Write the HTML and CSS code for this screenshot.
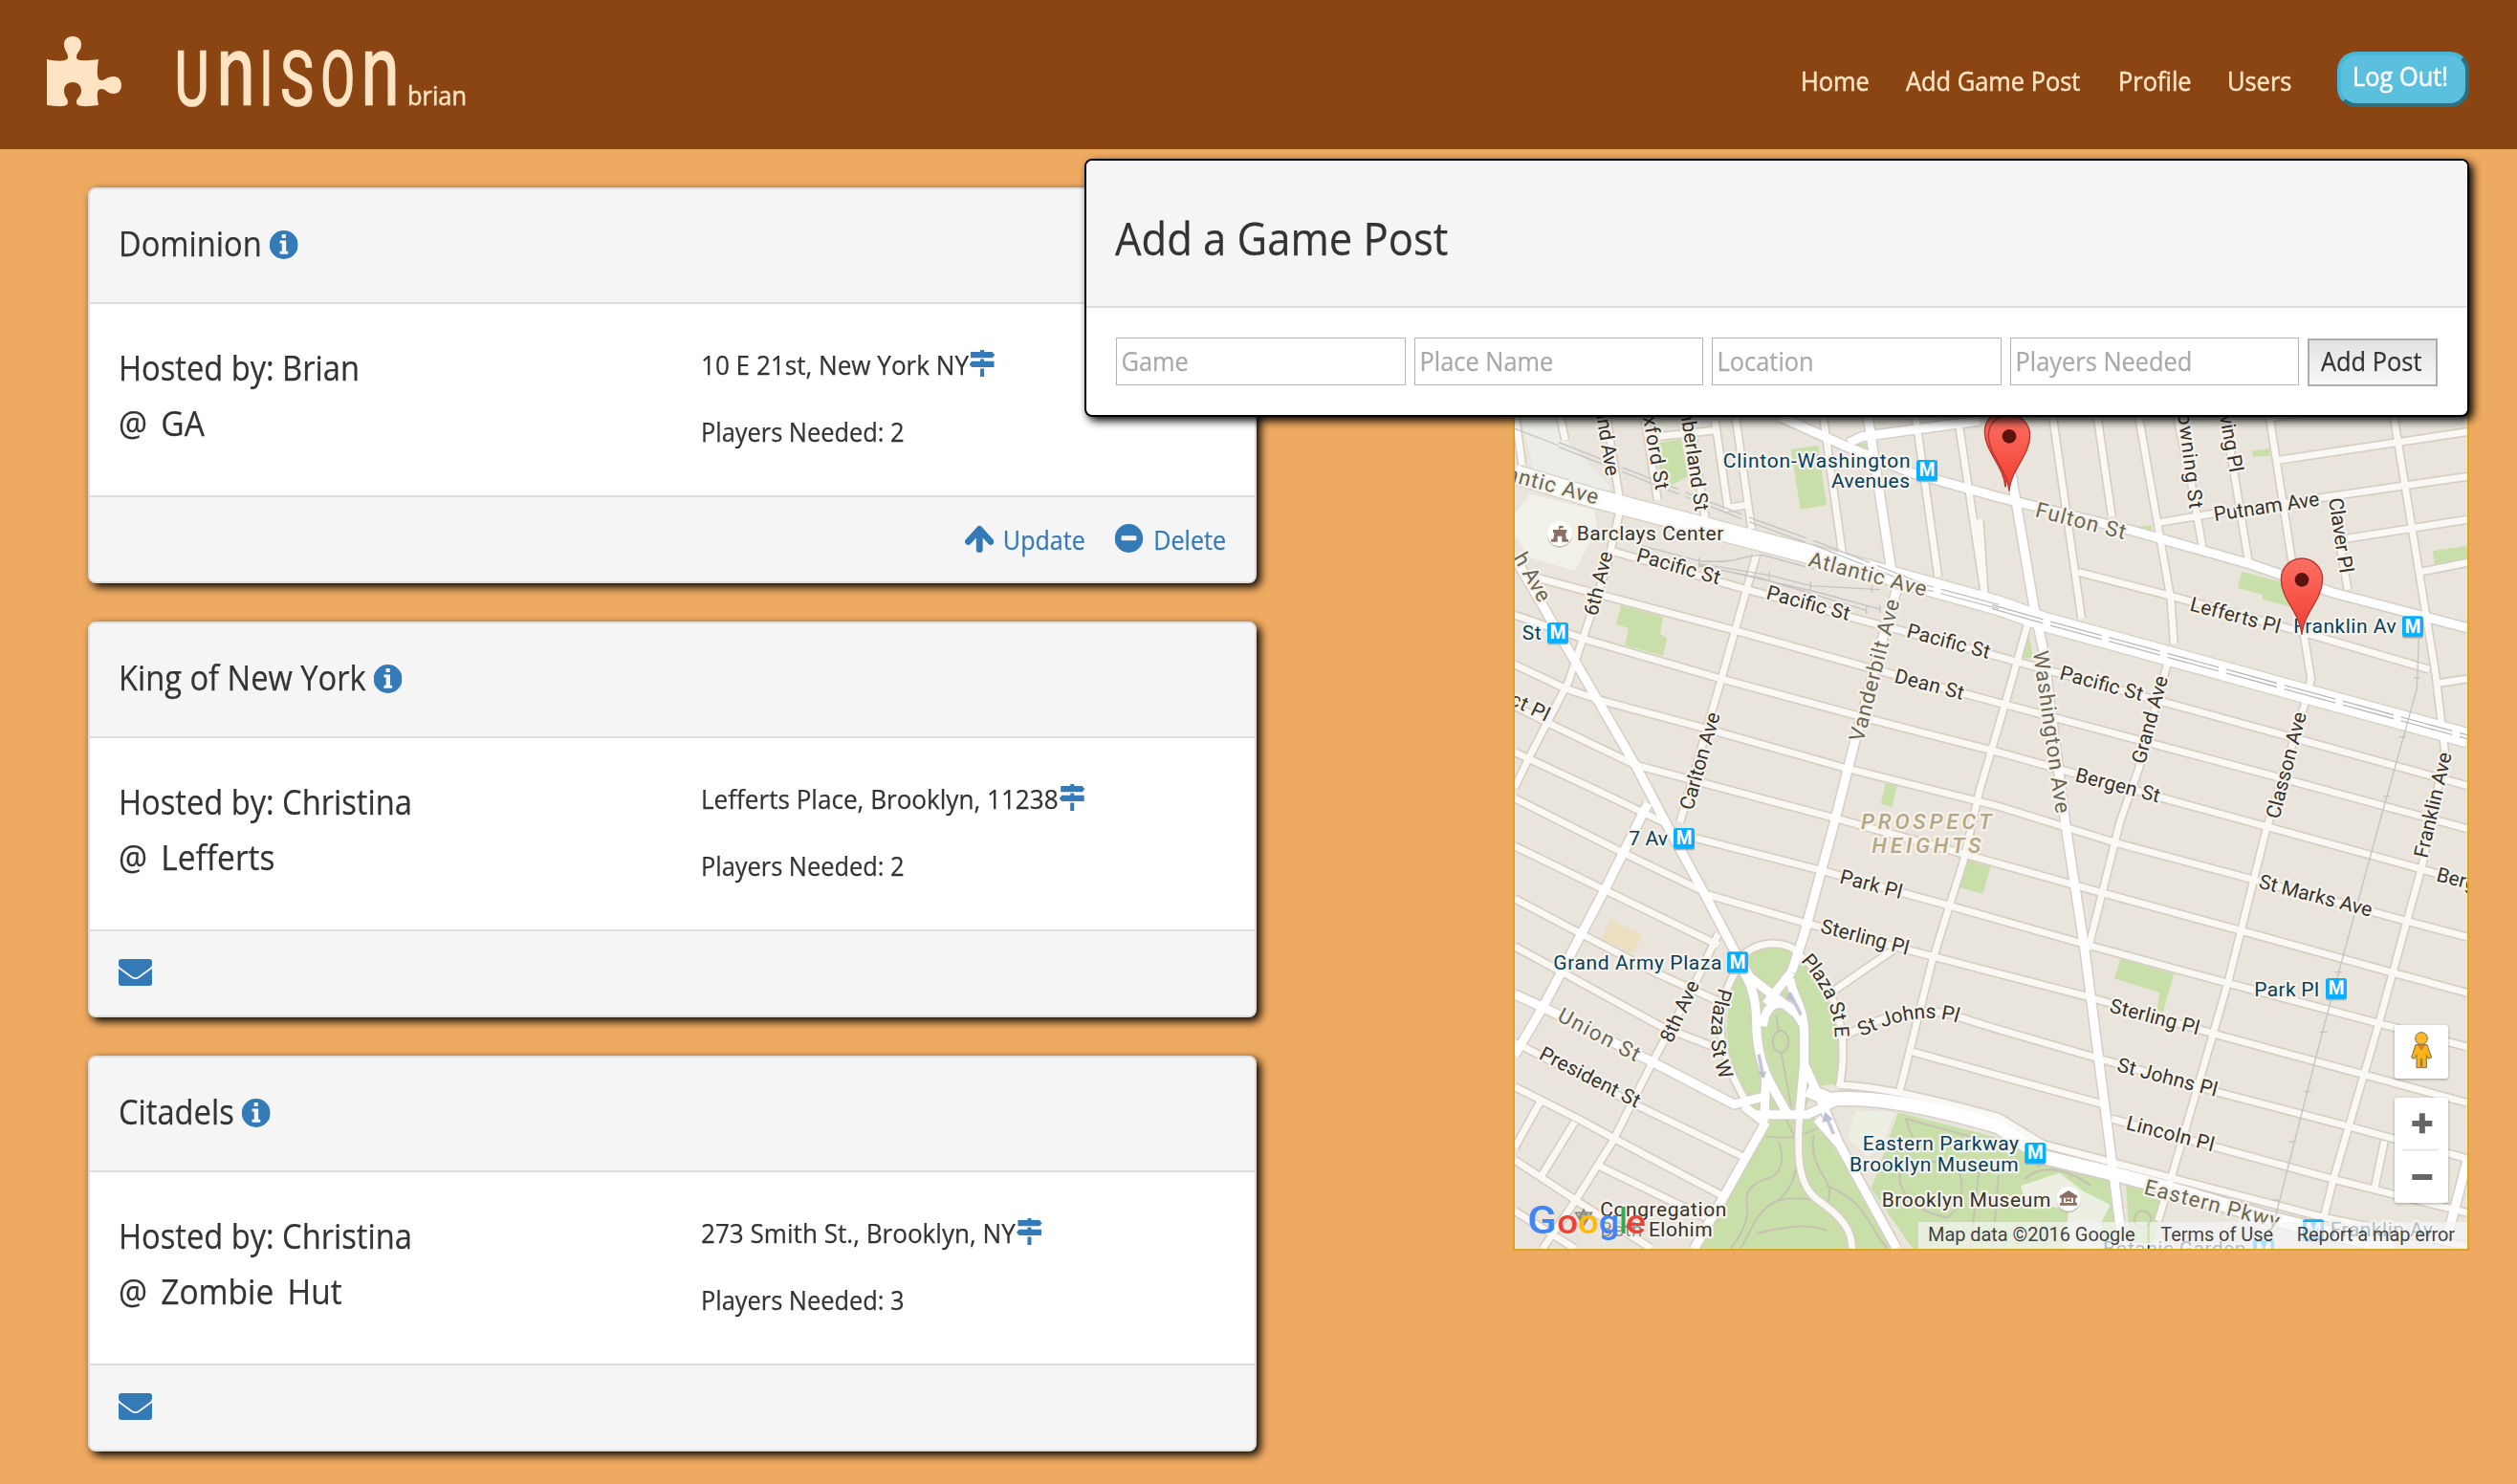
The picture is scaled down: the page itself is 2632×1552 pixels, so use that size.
FILE: index.html
```html
<!DOCTYPE html>
<html lang="en">
<head>
<meta charset="utf-8">
<title>Unison</title>
<link rel="stylesheet" href="styles.css">
</head>
<body>
<svg class="sprite" width="0" height="0">
  <symbol id="i-info" viewBox="0 0 30 30" preserveAspectRatio="none"><circle cx="15" cy="15" r="15" fill="#337ab7"/><path d="M12.9 4h4.2v4h-4.2zM10.8 10.5h6.6v11.3h2.1v3h-8.7v-3h2.200v-8.300h-2.200z" fill="#f5f5f5"/></symbol>
  <symbol id="i-sign" viewBox="0 0 27 28" preserveAspectRatio="none"><path d="M11.500 0h4v2H24l2.700 3.200L24 8.200H1.500V2h10zM11.500 9.500h4v2.300H26V18H2.700L0 14.900l2.700-3.100h8.800zM11.500 19.500h4V28h-4z" fill="#337ab7"/></symbol>
  <symbol id="i-up" viewBox="0 0 31 29" preserveAspectRatio="none"><path d="M3.500 17.500 15.500 4.500 27.500 17.500M15.500 6v19.500" fill="none" stroke="#337ab7" stroke-width="7" stroke-linecap="round" stroke-linejoin="round"/></symbol>
  <symbol id="i-minus" viewBox="0 0 30 30" preserveAspectRatio="none"><circle cx="15" cy="15" r="15" fill="#337ab7"/><rect x="7" y="12.200" width="16" height="5" rx="1" fill="#f5f5f5"/></symbol>
  <symbol id="i-mail" viewBox="0 0 35 28"><path d="M3 0h29q3 0 3 3v2.500q0 2-2.500 4L21 18q-3.500 2.500-7 0L2.500 9.500Q0 7.500 0 5.500V3q0-3 3-3zM0 10l13 9.500q4.500 3 9 0L35 10v15q0 3-3 3H3q-3 0-3-3z" fill="#337ab7"/></symbol>
</svg>

<header class="topbar">
  <div class="brand">
    <svg class="puzzle" viewBox="48 37 80 76"><path d="M49 62C58 64 71 65 71 60C71 54 67 54 67 46C67 41 71 38 76 38S85 41 85 46C85 54 80 54 80 60C80 65 94 63 103 62C101 75 101 84 106 84C110 84 112 80 119 80C124 80 127 84 127 89S124 98 119 98C112 98 111 93 106 93C101 93 101 99 103 110C94 111 80 113 80 107C80 102 85 101 85 95C85 89 81 86 76 86S67 89 67 95C67 101 71 103 71 107C71 113 58 111 49 110Z"/></svg>
    <svg class="wordmark" viewBox="184 50 232 66">
      <text transform="translate(182.800 110) scale(.7 1)" font-size="79">U</text>
      <text transform="translate(226.500 110) scale(.7 1)" font-size="104">n</text>
      <text transform="translate(271.500 110) scale(.64 1)" font-size="79">I</text>
      <text transform="translate(293.300 110) scale(.74 1)" font-size="79">S</text>
      <text transform="translate(335.300 110) scale(.66 1)" font-size="79">O</text>
      <text transform="translate(377.500 110) scale(.7 1)" font-size="104">n</text>
    </svg>
    <span class="user">brian</span>
  </div>
  <nav class="nav">
    <a class="n1">Home</a><a class="n2">Add Game Post</a><a class="n3">Profile</a><a class="n4">Users</a>
    <a class="logout"><span>Log Out!</span></a>
  </nav>
</header>

<main class="page">
  <section class="posts">
    <article class="card">
      <div class="card-head"><h2>Dominion<svg class="ic-info"><use href="#i-info"/></svg></h2></div>
      <div class="card-body">
        <div class="host"><p>Hosted by: Brian</p><p>@ GA</p></div>
        <div class="place"><p>10 E 21st, New York NY<svg class="ic-sign"><use href="#i-sign"/></svg></p><p>Players Needed: 2</p></div>
      </div>
      <div class="card-foot">
        <div class="actions">
          <a class="update"><svg class="ic-up"><use href="#i-up"/></svg>Update</a>
          <a class="delete"><svg class="ic-minus"><use href="#i-minus"/></svg>Delete</a>
        </div>
      </div>
    </article>
    <article class="card">
      <div class="card-head"><h2>King of New York<svg class="ic-info"><use href="#i-info"/></svg></h2></div>
      <div class="card-body">
        <div class="host"><p>Hosted by: Christina</p><p>@ Lefferts</p></div>
        <div class="place"><p>Lefferts Place, Brooklyn, 11238<svg class="ic-sign"><use href="#i-sign"/></svg></p><p>Players Needed: 2</p></div>
      </div>
      <div class="card-foot"><svg class="ic-mail"><use href="#i-mail"/></svg></div>
    </article>
    <article class="card">
      <div class="card-head"><h2>Citadels<svg class="ic-info"><use href="#i-info"/></svg></h2></div>
      <div class="card-body">
        <div class="host"><p>Hosted by: Christina</p><p>@ Zombie Hut</p></div>
        <div class="place"><p>273 Smith St., Brooklyn, NY<svg class="ic-sign"><use href="#i-sign"/></svg></p><p>Players Needed: 3</p></div>
      </div>
      <div class="card-foot"><svg class="ic-mail"><use href="#i-mail"/></svg></div>
    </article>
  </section>

  <section class="map">
    <svg viewBox="42 -312 2988 2970">
      <defs>
        <g id="minor">
          <path d="M350 470 770 590 1560 800 2050 935 3030 1205M100 550 740 720 1150 835 1560 945 2030 1070 2460 1185 3030 1340M42 670 260 745 690 870 1170 1000 1560 1100 2060 1240 2880 1465 3030 1510M42 825 200 900 320 940 620 1020 1080 1150 1560 1270 1930 1385 2360 1500 2840 1630 3030 1680"/>
          <path d="M42 955 150 1010 420 1140 1040 1305 1560 1450 1880 1540 2320 1660 2790 1790 3030 1855M610 1370 1000 1470 1400 1580 1840 1705 2280 1825 2750 1950 3030 2025M640 1545 950 1635 1350 1740 1850 1870 2240 1985 2700 2110 3030 2200M1060 2000Q1250 1890 1400 1920L1560 1970 1870 2060 2240 2165 2660 2275 3030 2375M1290 2040 1560 2115 1890 2205M1915 2250 2610 2440 3030 2545"/>
          <path d="M1060 2145Q1200 2145 1560 2245L1700 2330 1930 2390 2100 2435 2580 2560 3030 2650M800 480 690 870 560 1320M370 350 330 520 210 880 90 1110 42 1210M1650 700 1580 950 1500 1220 1450 1440 1350 1760 1250 2160M2090 820 2000 1150 1940 1320 1840 1720M2000 50 2100 620 2110 760M2520 950 2400 1340 2280 1820 2100 2440 2060 2570M2410 50 2480 500 2540 870 2520 950M2800 50 2930 850 2960 1100 2890 1450 2750 1960 2610 2440 2580 2560M2770 2320 2740 2465"/>
          <path d="M1730 50 1820 680M1870 50 1915 360M2120 50 2165 260 2200 460M2270 50 2345 510M2610 330 2655 590M2060 380 2240 350 3030 235M2430 185 3030 95M2650 430 3030 370M2880 535 3030 505M2930 885 3030 870M1810 535 2100 610 2500 720 2910 840M2420 50 2520 30M1500 370 1515 600"/>
          <path d="M45 50 65 200M185 50 200 120M330 50 370 300M450 50 490 310M590 50 640 370M670 60 710 330M735 50 785 400M490 110 670 90M700 335 765 325M1010 50 1070 480M1300 50 1370 550M1435 70 1515 600M42 1100 300 1220 520 1325M42 1245 390 1420 620 1530M42 1395 330 1535 680 1705M42 1560 250 1670 480 1790 700 1890M42 1710 190 1790 500 1960 680 2030M42 2010 100 2040 430 2210 760 2370M42 2150 240 2250 350 2310 690 2490M42 2380 240 2510 470 2657M310 2400 640 2560M42 2540 230 2657M680 1670 610 1820 470 2080 350 2320 230 2510 130 2657M120 2200 42 2340M230 2260 125 2430M1040 1850 1230 1720M740 1760C780 1690 900 1680 940 1740C1060 1840 1090 2000 1060 2150M740 1780C640 1940 700 2080 770 2200M935 2240C930 2340 920 2460 1000 2510C1070 2560 1100 2600 1100 2657"/>
        </g>
        <g id="major">
          <path d="M880 50 1080 140 1290 225 1560 300 1980 405 2350 510 2610 600 3030 710M1090 130 1130 110 1500 60M1150 50 1225 540M1240 590 1180 800 1100 1100 1045 1320 950 1670 910 1790M1580 50 1600 230 1670 640 1700 780 1770 1330 1830 1720 1950 2657M42 490 240 830 420 1140 520 1330 640 1550 740 1740 800 1840M460 1260 330 1520 130 1900 42 2050M42 1860 130 1900 470 2070 730 2205 830 2180M3030 2380 2970 2610"/>
          <path d="M830 2260 700 2490 605 2657M990 2250 1060 2330 1240 2657M760 1790Q800 1850 800 1950 800 2060 850 2150L900 2240M910 1790 830 1890M760 1790 950 1940M905 1810C910 1860 950 1900 950 1980V2080L1010 2210 1060 2330M820 1960C830 1870 900 1860 950 1960M950 2080 935 2237M790 2237H960L1060 2190M760 2210 830 2265M830 2120 825 2250"/>
        </g>
        <g id="wide"><path d="M42 228 300 305 780 430 1200 540 1560 640 1700 690 2100 800 2500 910 3030 1055"/></g>
        <g id="pkwy"><path d="M960 2160 1030 2190Q1200 2170 1560 2275L1700 2370 1930 2425 2100 2470 2400 2560 2800 2657"/></g>
        <g id="metro"><rect y="5" width="66" height="65" rx="8" fill="#a8b4b8"/><rect width="66" height="65" rx="8" fill="#04b0ff"/><text x="8" y="52" font-size="58" font-weight="700" fill="#fff" textLength="50" lengthAdjust="spacingAndGlyphs">M</text></g>
        <linearGradient id="pinfill" x1="0" y1="0" x2="0" y2="1"><stop offset="0" stop-color="#fb7064"/><stop offset="1" stop-color="#f23d30"/></linearGradient>
        <g id="pin"><path d="M0 0C-6-70-65-110-65-174A65 65 0 1 1 65-174C65-110 6-70 0 0Z" fill="url(#pinfill)" stroke="#b63830" stroke-width="4"/></g>
        <path id="pw" d="M682 1838Q630 2000 690 2135"/>
        <path id="pe" d="M938 1755Q1050 1880 1046 2000"/>
        <path id="sj" d="M1130 1993Q1300 1905 1435 1950"/>
      </defs>
      <rect x="42" y="-312" width="2988" height="2970" fill="#e9e5dc"/>
      <path d="M60 50H180L200 120 345 270 300 290 100 210Z" fill="#ebede6"/>
      <path d="M42 350 90 290 290 340 300 380 290 420 230 530 90 490 42 420Z" fill="#f1f1e8"/>
      <g fill="#c9dfaa">
        <path d="M490 130 565 118 585 235 520 268 500 250ZM908 150 993 138 1020 325 938 338ZM1100 130H1145V155ZM375 640 507 675 498 730 520 742 507 797 388 765 398 710 360 700ZM1205 1198 1242 1205 1225 1272 1190 1262Z"/>
        <path d="M2355 155 2410 147V170L2357 174ZM1980 395 2040 387V412ZM2323 533 2480 575V645L2388 620V605L2310 585ZM2922 468 3030 453V500L2927 510ZM1655 730 1668 805 1636 805ZM1460 1438 1535 1460 1510 1545 1438 1525ZM1942 1748 2110 1795 2075 1918 2057 1910 2065 1855 1923 1810Z"/>
        <path d="M745 1780C780 1700 890 1700 930 1740C1040 1840 1080 1980 1055 2140L980 2150 940 2260H820L770 2190C680 2070 700 1900 745 1780ZM820 2280 835 2240H980L1240 2657H605L720 2480ZM1245 2230 1560 2310 1700 2390 1920 2440 1950 2657H1290L1160 2470ZM1960 2455 2078 2495 2040 2657H1970Z"/>
      </g>
      <path d="M343 1625 440 1670 415 1735 313 1685Z" fill="#ebdfc2"/>
      <path d="M1110 2225 1235 2230 1200 2320 1150 2370 1085 2310ZM1630 2460 1750 2420 1830 2480 1910 2520 1880 2580 1890 2657H1760L1780 2540 1640 2500Z" fill="#ecefe2"/>
      <g fill="none" stroke="#c5c2b2" stroke-width="6">
        <path d="M890 2250C960 2350 920 2480 860 2510S790 2590 750 2657M860 2510Q920 2490 1000 2510M830 2305Q920 2320 990 2280M870 2320Q900 2420 830 2440T770 2520T720 2657M980 2300C960 2420 1060 2440 1020 2520M1020 2460C1150 2510 1150 2590 1210 2657M800 2610Q950 2570 1020 2600M1268 2250 1560 2330M1268 2250 1290 2310M1250 2390Q1320 2370 1430 2400 1470 2500 1400 2560 1280 2540 1250 2450ZM1500 2400 1470 2657M1560 2430 1540 2657M1640 2440Q1720 2370 1850 2460M1680 2400Q1750 2360 1860 2430"/>
        <circle cx="2012" cy="2565" r="26"/>
      </g>
      <g fill="none" stroke-linejoin="round">
        <use href="#minor" class="casing-minor"/><use href="#major" class="casing-major"/><use href="#pkwy" class="casing-pkwy"/><use href="#wide" class="casing-wide"/>
        <use href="#minor" class="fill-minor"/><use href="#major" class="fill-major"/><use href="#pkwy" class="fill-pkwy"/><use href="#wide" class="fill-wide"/>
        <g stroke="#c5c2b2" stroke-width="6"><ellipse cx="876" cy="2008" rx="25" ry="34"/><path d="M862 1925 870 1975M878 2042 910 2215"/></g>
        <g stroke="#c3c3c3" stroke-width="4">
          <path d="M42 85 180 138M180 128 800 372 990 440 1340 578 1560 637M180 142 800 386 990 454 1340 592 1560 650" stroke-dasharray="190 24"/>
          <path d="M1540 638 1700 684 3030 1046M1540 650 1700 696 3030 1058" stroke="#b9b9b5" stroke-dasharray="166 24"/>
          <path d="M440 452 620 500C760 510 740 480 820 482L980 525M620 508 840 545 970 578 1190 590M620 512 810 556 1000 600 1190 652M620 516 800 550 1145 655M620 490V520M840 533V560M970 565V595M1162 578V600M1187 640V664M1145 643V667"/>
          <path d="M2878 740 2872 900 2850 980 2755 1320 2575 1980 2420 2590M2862 866H2882M2816 1052H2838M2766 1238H2788M2614 1790H2636M2568 1978H2590M2518 2164H2540M2472 2322H2494M2416 2505H2438"/>
        </g>
        <g stroke="#c4c8dc" stroke-width="11"><path d="M940 1925 905 1855M807 2048 822 2120M1042 2298 1018 2240"/></g>
        <path d="M892 1872 904 1850 920 1880ZM805 2102H832L822 2124ZM1006 2262 1015 2228 1040 2252Z" fill="#b9bfd6"/>
      </g>
      <g class="labels">
        <g class="road">
          <text transform="translate(12 246) rotate(15)" textLength="296">antic Ave</text>
          <text transform="translate(960 515) rotate(14.700)" textLength="380">Atlantic Ave</text>
          <text transform="translate(1135 1070) rotate(-75.500)" textLength="458">Vanderbilt Ave</text>
          <text transform="translate(1672 360) rotate(14.500)" textLength="290">Fulton St</text>
          <text transform="translate(1668 785) rotate(82)" textLength="514">Washington Ave</text>
          <text transform="translate(172 1940) rotate(28)" textLength="282">Union St</text>
          <text transform="translate(2013 2485) rotate(14.500)" textLength="435">Eastern Pkwy</text>
          <text transform="translate(36 490) rotate(60)" textLength="166">h Ave</text>
        </g>
        <g class="street">
          <text transform="translate(295 25) rotate(81)" textLength="213">and Ave</text>
          <text transform="translate(436 5) rotate(80)" textLength="278">Oxford St</text>
          <text transform="translate(558 10) rotate(81.500)" textLength="340">mberland St</text>
          <text transform="translate(600 1285) rotate(-74)" textLength="315">Carlton Ave</text>
          <text transform="translate(300 675) rotate(-76)" textLength="205">6th Ave</text>
          <text transform="translate(420 500) rotate(16)" textLength="270">Pacific St</text>
          <text transform="translate(828 618) rotate(15)" textLength="268">Pacific St</text>
          <text transform="translate(1268 738) rotate(15)" textLength="268">Pacific St</text>
          <text transform="translate(1230 880) rotate(14.500)" textLength="222">Dean St</text>
          <text transform="translate(22 948) rotate(26)" textLength="130">ct Pl</text>
          <text transform="translate(2122 40) rotate(83)" textLength="300">owning St</text>
          <text transform="translate(2253 45) rotate(80)" textLength="182">ving Pl</text>
          <text transform="translate(2238 375) rotate(-8.500)" textLength="334">Putnam Ave</text>
          <text transform="translate(2595 305) rotate(81.500)" textLength="238">Claver Pl</text>
          <text transform="translate(2157 655) rotate(14.500)" textLength="290">Lefferts Pl</text>
          <text transform="translate(1748 870) rotate(15)" textLength="268">Pacific St</text>
          <text transform="translate(2018 1140) rotate(-75)" textLength="283">Grand Ave</text>
          <text transform="translate(1797 1190) rotate(14.500)" textLength="272">Bergen St</text>
          <text transform="translate(2440 1312) rotate(-75.500)" textLength="343">Classon Ave</text>
          <text transform="translate(2905 1435) rotate(-77)" textLength="338">Franklin Ave</text>
          <text transform="translate(1058 1510) rotate(14.500)" textLength="200">Park Pl</text>
          <text transform="translate(998 1665) rotate(14.500)" textLength="284">Sterling Pl</text>
          <text transform="translate(2373 1525) rotate(14.500)" textLength="364">St Marks Ave</text>
          <text transform="translate(2930 1503) rotate(14.500)" textLength="270">Bergen St</text>
          <text transform="translate(1905 1915) rotate(14.500)" textLength="288">Sterling Pl</text>
          <text transform="translate(1928 2100) rotate(14.500)" textLength="322">St Johns Pl</text>
          <text transform="translate(1957 2282) rotate(14.500)" textLength="282">Lincoln Pl</text>
          <text transform="translate(535 2015) rotate(-65)" textLength="206">8th Ave</text>
          <text transform="translate(115 2060) rotate(27)" textLength="345">President St</text>
          <text><textPath href="#pw" textLength="296">Plaza St W</textPath></text>
          <text><textPath href="#pe" textLength="270">Plaza St E</textPath></text>
          <text><textPath href="#sj" textLength="312">St Johns Pl</textPath></text>
        </g>
        <g class="street poi">
          <text x="236" y="436" textLength="461">Barclays Center</text>
          <text x="1193" y="2525" textLength="530">Brooklyn Museum</text>
          <text x="310" y="2555" textLength="396">Congregation</text>
          <text x="310" y="2620" textLength="352"><tspan opacity=".5">Beth</tspan> Elohim</text>
        </g>
        <g class="station">
          <text x="695" y="206" textLength="588">Clinton-Washington</text><text x="1035" y="271" textLength="246">Avenues</text>
          <text x="65" y="747" textLength="60">St</text><text x="400" y="1392" textLength="122">7 Av</text>
          <text x="2485" y="727" textLength="322">Franklin Av</text><text x="2362" y="1865" textLength="203">Park Pl</text>
          <text x="163" y="1782" textLength="528">Grand Army Plaza</text>
          <text x="1133" y="2348" textLength="490">Eastern Parkway</text><text x="1092" y="2415" textLength="530">Brooklyn Museum</text>
          <text x="2600" y="2620" textLength="322">Franklin Av</text><text x="1887" y="2678" textLength="448">Botanic Garden</text>
        </g>
        <g class="district"><text x="1128" y="1342" textLength="410">PROSPECT</text><text x="1162" y="1417" textLength="342">HEIGHTS</text></g>
      </g>
      <use href="#metro" x="1302" y="183"/><use href="#metro" x="144" y="693"/><use href="#metro" x="540" y="1338"/><use href="#metro" x="2826" y="673"/><use href="#metro" x="2586" y="1809"/><use href="#metro" x="708" y="1726"/><use href="#metro" x="1642" y="2325"/><use href="#metro" x="2514" y="2566"/><use href="#metro" x="2358" y="2630"/>
      <circle cx="183" cy="419" r="39" fill="#b9b5ac"/><circle cx="183" cy="415" r="39" fill="#fff"/>
      <path d="M156 440V432H163L166 412H162V402H180V390H194V397H184V402H205V412H201L204 432H210V440H190V422H176V440Z" fill="#8d6e63"/>
      <circle cx="1779" cy="2506" r="38" fill="#b9b5ac"/><circle cx="1779" cy="2502" r="38" fill="#fff"/>
      <path d="M1751 2492 1779 2475 1807 2492V2498H1801V2514H1806V2522H1752V2514H1757V2498H1751ZM1764 2498V2514H1794V2498ZM1770 2500H1775V2503H1783V2500H1788V2511H1783V2508H1775V2511H1770Z" fill="#8d6e63" fill-rule="evenodd"/>
      <path d="M258 2535 270 2560H245ZM258 2578 246 2552H270ZM233 2545H283L258 2585Z" fill="none" stroke="#8b8880" stroke-width="5"/>
      <use href="#pin" x="1581" y="268"/><use href="#pin" x="1593" y="280"/><circle cx="1593" cy="109" r="22" fill="#5c120d"/>
      <use href="#pin" x="2511" y="731"/><circle cx="2511" cy="559" r="22" fill="#5c120d"/>
      <g class="logo"><text x="81" y="2609" font-size="122" fill="#4285f4" textLength="92" lengthAdjust="spacingAndGlyphs">G</text><text x="175" y="2609" font-size="106" fill="#ea4335" textLength="66" lengthAdjust="spacingAndGlyphs">o</text><text x="240" y="2609" font-size="106" fill="#fbbc05" textLength="66" lengthAdjust="spacingAndGlyphs">o</text><text x="305" y="2609" font-size="106" fill="#4285f4" textLength="64" lengthAdjust="spacingAndGlyphs">g</text><text x="370" y="2609" font-size="112" fill="#34a853" textLength="25" lengthAdjust="spacingAndGlyphs">l</text><text x="391" y="2609" font-size="106" fill="#ea4335" textLength="62" lengthAdjust="spacingAndGlyphs">e</text></g>
      <path d="M1308 2574H2027V2658H1308ZM2033 2574H3030V2658H2033Z" fill="#f5f5f5" fill-opacity=".7"/>
      <g class="legal"><text x="1338" y="2633" textLength="650">Map data ©2016 Google</text><text x="2068" y="2633" textLength="353">Terms of Use</text><text x="2495" y="2633" textLength="496">Report a map error</text></g>
      <g class="ctl"><rect x="2802" y="1956" width="168" height="168" rx="8"/><rect x="2802" y="2184" width="168" height="330" rx="8"/></g>
      <path d="M2826 2348H2940" stroke="#e6e6e6" stroke-width="5"/>
      <path d="M2857 2265H2920M2888.500 2233V2296M2857 2433H2920" stroke="#666" stroke-width="18"/>
      <path d="M2868 2018H2904L2918 2058 2908 2062 2902 2050V2090H2888V2062H2884V2090H2871V2050L2864 2062 2855 2058Z" fill="#fbb31c" stroke="#7d6a45" stroke-width="3"/><path d="M2872 2018H2900L2886 2036Z" fill="#e07f1b"/><circle cx="2886" cy="1998" r="19" fill="#fcb92a" stroke="#7d6a45" stroke-width="3"/>
    </svg>
  </section>
</main>

<section class="composer">
  <div class="composer-head"><h1>Add a Game Post</h1></div>
  <form class="composer-form">
    <label><input placeholder="Game"></label><label><input placeholder="Place Name"></label><label><input placeholder="Location"></label><label><input placeholder="Players Needed"></label>
    <button type="button"><span>Add Post</span></button>
  </form>
</section>
</body>
</html>
```
FILE: styles.css
```css
* { box-sizing: border-box; }
body {
  margin: 0;
  width: 2632px;
  height: 1552px;
  overflow: hidden;
  position: relative;
  background: #efaa61;
  color: #333;
  font-family: "Open Sans", "Noto Sans", sans-serif;
  font-size: 28px;
  -webkit-text-stroke: .25px;
}
h1, h2, p { margin: 0; font-weight: 400; }
a, button, p, h1, h2 { white-space: nowrap; }
.sprite { position: absolute; }

/* Slightly condensed lettering */
h1, h2, p, .user, .nav > a:not(.logout), .logout span, input, button span {
  transform: scaleX(.907);
  transform-origin: 0 50%;
}

.topbar {
  height: 156px;
  background: #8b4513;
  color: #ffe4c4;
  display: flex;
  justify-content: space-between;
  padding: 0 50px 0 48px;
}
.brand { display: flex; align-items: flex-start; }
.puzzle { width: 80px; height: 76px; margin-top: 37px; fill: #ffe4c4; }
.wordmark { width: 232px; height: 66px; margin: 50px 0 0 56px; overflow: visible; fill: #ffe4c4; stroke: #ffe4c4; stroke-width: 1.7; font-family: Roboto, sans-serif; -webkit-text-stroke: 1.700px; }
.user { margin: 79px 0 0 10px; line-height: 40px; -webkit-text-stroke: .5px; }
.nav { display: flex; align-items: flex-start; line-height: 40px; padding-top: 54px; -webkit-text-stroke: .5px; }
.nav a { margin-top: 10px; }
.nav .n1 { width: 110px; }
.nav .n2 { width: 222px; }
.nav .n3 { width: 114px; }
.nav .n4 { width: 115px; }
.nav .logout {
  margin-top: 0;
  width: 138px;
  height: 58px;
  line-height: 42px;
  padding-left: 12px;
  color: #fff;
  background: #5bc0de;
  border: 4px outset #46b8da;
  border-radius: 20px;
}
.logout span, button span { display: inline-block; }

.page { display: flex; padding: 40px 50px 0 92px; justify-content: space-between; align-items: flex-start; }
.posts { width: 1222px; display: flex; flex-direction: column; gap: 40px; }
.card {
  height: 414px;
  display: flex;
  flex-direction: column;
  background: #fff;
  border: 2px solid #ddd;
  border-radius: 8px;
  box-shadow: 4px 4px 10px #000;
}
.card-head {
  height: 120px;
  padding-left: 30px;
  background: #f5f5f5;
  border-bottom: 2px solid #ddd;
  border-radius: 6px 6px 0 0;
}
.card-head h2 { display: flex; font-size: 36px; line-height: 114px; }
.ic-info { width: 33px; height: 30px; margin: 43px 0 0 9px; }
.card-body { flex: 1; display: flex; padding-left: 30px; }
.host { width: 609px; padding-top: 38px; font-size: 36px; line-height: 58px; }
.host p:last-child { word-spacing: 6px; transform: scaleX(.93); }
.place { padding-top: 28px; line-height: 71px; }
.place p { display: flex; height: 70px; }
.place p:first-child { transform: scaleX(.932); }
.ic-sign { width: 29px; height: 28px; margin: 20px 0 0 1px; }
.card-foot {
  height: 90px;
  border-top: 2px solid #ddd;
  border-radius: 0 0 6px 6px;
  background: #f5f5f5;
  padding: 29px 30px 0;
}
.actions {
  display: flex;
  justify-content: flex-end;
  margin-top: -29px;
  line-height: 88px;
  color: #337ab7;
  transform: scaleX(.895);
  transform-origin: 100% 50%;
}
.actions a { display: flex; }
.delete { margin-left: 35px; }
.ic-up { width: 34px; height: 29px; margin: 29px 11px 0 0; }
.ic-minus { width: 33px; height: 30px; margin: 28px 12px 0 0; }
.ic-mail { width: 35px; height: 28px; display: block; }

.map { width: 1000px; height: 994px; margin-top: 118px; border: 2px solid #daa520; }
.map svg { display: block; width: 996px; height: 990px; font-family: Roboto, sans-serif; -webkit-text-stroke: 0; }
.casing-minor { stroke: #d6cec3; stroke-width: 30; }
.casing-major { stroke: #d6cdc8; stroke-width: 36; }
.casing-pkwy { stroke: #d6cdc8; stroke-width: 52; }
.casing-wide { stroke: #d8d0c6; stroke-width: 66; }
.fill-minor { stroke: #faf8f4; stroke-width: 20; }
.fill-major { stroke: #fff; stroke-width: 27; }
.fill-pkwy { stroke: #fff; stroke-width: 42; }
.fill-wide { stroke: #fff; stroke-width: 58; }
.labels { stroke: #f5f2ec; stroke-width: 14; stroke-linejoin: round; paint-order: stroke; font-size: 63px; }
.road { fill: #6b6653; font-size: 67px; }
.street { fill: #38332b; }
.station { fill: #073f5c; }
.district { fill: #b5a684; font-size: 68px; font-weight: 500; font-style: italic; }
.logo { font-weight: 500; }
.legal { fill: #444; font-size: 60px; }
.ctl { fill: #fff; filter: drop-shadow(0 3px 4px rgba(0, 0, 0, .3)); }

.composer {
  position: absolute;
  left: 1134px;
  top: 166px;
  width: 1448px;
  height: 270px;
  background: #fff;
  border: 2px solid #000;
  border-radius: 8px;
  box-shadow: 4px 4px 10px #000;
}
.composer-head {
  height: 154px;
  padding: 6px 0 0 30px;
  background: #f5f5f5;
  border-bottom: 2px solid #ddd;
  border-radius: 6px 6px 0 0;
}
.composer-head h1 { font-size: 48px; line-height: 150px; }
.composer-form { display: flex; padding: 31px 31px 0; gap: 9px; }
.composer-form label {
  width: 302.500px;
  height: 50px;
  border: 1px solid #b5b5b5;
}
.composer-form input {
  display: block;
  width: 330px;
  height: 48px;
  padding: 0 5px 3px;
  border: 0;
  background: none;
  font: inherit;
}
.composer-form input::placeholder { color: #a9a9a9; opacity: 1; }
.composer-form button {
  width: 138px;
  height: 50px;
  margin-top: 1px;
  padding: 0 0 4px 12px;
  text-align: left;
  border: 2px solid #adadad;
  background: linear-gradient(#e2e2e2, #f8f8f8);
  color: #333;
  font: inherit;
}
```
